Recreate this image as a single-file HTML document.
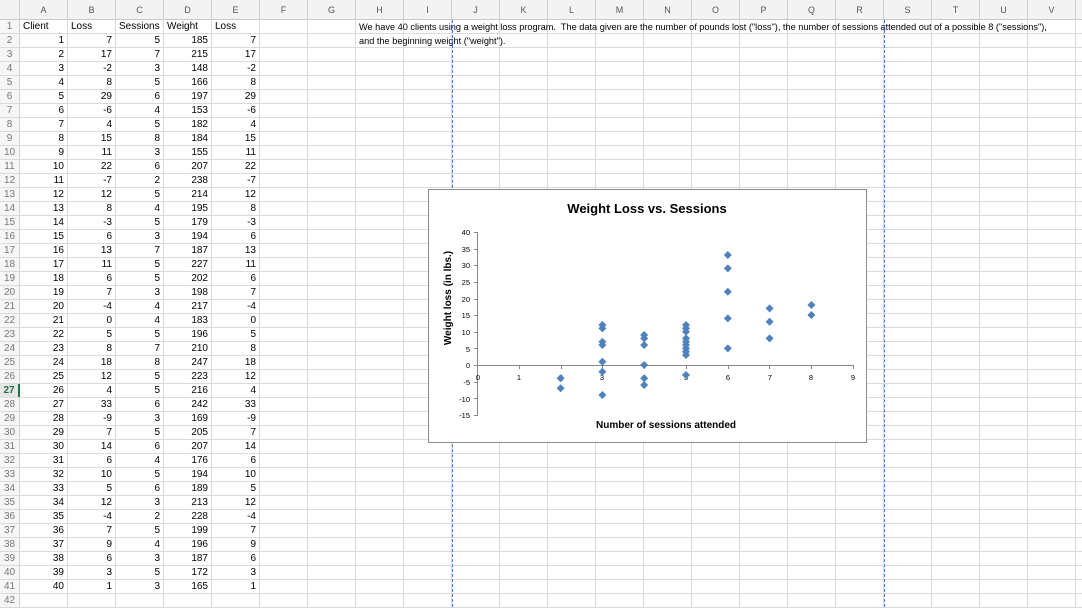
<!DOCTYPE html>
<html><head><meta charset="utf-8"><style>
*{margin:0;padding:0;box-sizing:border-box}
body{width:1082px;height:607px;overflow:hidden;background:#fff;font-family:"Liberation Sans",sans-serif;font-size:10px;color:#000;position:relative}
.r{position:absolute;left:0;height:14px;width:1082px;display:flex;border-bottom:1px solid #dadada}
.r div{width:48px;height:13px;border-right:1px solid #dadada;line-height:13px;padding:0 3px;white-space:nowrap;text-align:right;flex:none}
.r div.h{width:20px;text-align:center;color:#777;background:#f6f6f6;padding:0;border-right:1px solid #cfcfcf}
.r div.l{text-align:left}
.hd{position:absolute;left:0;top:0;height:20px;width:1082px;display:flex;background:#f3f3f3;border-bottom:1px solid #c8c8c8}
.hd div{width:48px;height:20px;border-right:1px solid #d0d0d0;line-height:20px;text-align:center;color:#555;font-size:9px;flex:none}
.hd div.h{width:20px}
.txt{position:absolute;left:359px;font-size:9.2px;line-height:13px;white-space:nowrap;letter-spacing:0}
.pb{position:absolute;top:20px;bottom:0;border-left:1px dashed #3b7fd9}
</style></head><body>
<div class="hd"><div class="h"></div><div>A</div><div>B</div><div>C</div><div>D</div><div>E</div><div>F</div><div>G</div><div>H</div><div>I</div><div>J</div><div>K</div><div>L</div><div>M</div><div>N</div><div>O</div><div>P</div><div>Q</div><div>R</div><div>S</div><div>T</div><div>U</div><div>V</div></div>

<div class="r" style="top:20px"><div class="h">1</div><div class="l">Client</div><div class="l">Loss</div><div class="l">Sessions</div><div class="l">Weight</div><div class="l">Loss</div><div></div><div></div><div></div><div></div><div></div><div></div><div></div><div></div><div></div><div></div><div></div><div></div><div></div><div></div><div></div><div></div><div></div></div>
<div class="r" style="top:34px"><div class="h">2</div><div>1</div><div>7</div><div>5</div><div>185</div><div>7</div><div></div><div></div><div></div><div></div><div></div><div></div><div></div><div></div><div></div><div></div><div></div><div></div><div></div><div></div><div></div><div></div><div></div></div>
<div class="r" style="top:48px"><div class="h">3</div><div>2</div><div>17</div><div>7</div><div>215</div><div>17</div><div></div><div></div><div></div><div></div><div></div><div></div><div></div><div></div><div></div><div></div><div></div><div></div><div></div><div></div><div></div><div></div><div></div></div>
<div class="r" style="top:62px"><div class="h">4</div><div>3</div><div>-2</div><div>3</div><div>148</div><div>-2</div><div></div><div></div><div></div><div></div><div></div><div></div><div></div><div></div><div></div><div></div><div></div><div></div><div></div><div></div><div></div><div></div><div></div></div>
<div class="r" style="top:76px"><div class="h">5</div><div>4</div><div>8</div><div>5</div><div>166</div><div>8</div><div></div><div></div><div></div><div></div><div></div><div></div><div></div><div></div><div></div><div></div><div></div><div></div><div></div><div></div><div></div><div></div><div></div></div>
<div class="r" style="top:90px"><div class="h">6</div><div>5</div><div>29</div><div>6</div><div>197</div><div>29</div><div></div><div></div><div></div><div></div><div></div><div></div><div></div><div></div><div></div><div></div><div></div><div></div><div></div><div></div><div></div><div></div><div></div></div>
<div class="r" style="top:104px"><div class="h">7</div><div>6</div><div>-6</div><div>4</div><div>153</div><div>-6</div><div></div><div></div><div></div><div></div><div></div><div></div><div></div><div></div><div></div><div></div><div></div><div></div><div></div><div></div><div></div><div></div><div></div></div>
<div class="r" style="top:118px"><div class="h">8</div><div>7</div><div>4</div><div>5</div><div>182</div><div>4</div><div></div><div></div><div></div><div></div><div></div><div></div><div></div><div></div><div></div><div></div><div></div><div></div><div></div><div></div><div></div><div></div><div></div></div>
<div class="r" style="top:132px"><div class="h">9</div><div>8</div><div>15</div><div>8</div><div>184</div><div>15</div><div></div><div></div><div></div><div></div><div></div><div></div><div></div><div></div><div></div><div></div><div></div><div></div><div></div><div></div><div></div><div></div><div></div></div>
<div class="r" style="top:146px"><div class="h">10</div><div>9</div><div>11</div><div>3</div><div>155</div><div>11</div><div></div><div></div><div></div><div></div><div></div><div></div><div></div><div></div><div></div><div></div><div></div><div></div><div></div><div></div><div></div><div></div><div></div></div>
<div class="r" style="top:160px"><div class="h">11</div><div>10</div><div>22</div><div>6</div><div>207</div><div>22</div><div></div><div></div><div></div><div></div><div></div><div></div><div></div><div></div><div></div><div></div><div></div><div></div><div></div><div></div><div></div><div></div><div></div></div>
<div class="r" style="top:174px"><div class="h">12</div><div>11</div><div>-7</div><div>2</div><div>238</div><div>-7</div><div></div><div></div><div></div><div></div><div></div><div></div><div></div><div></div><div></div><div></div><div></div><div></div><div></div><div></div><div></div><div></div><div></div></div>
<div class="r" style="top:188px"><div class="h">13</div><div>12</div><div>12</div><div>5</div><div>214</div><div>12</div><div></div><div></div><div></div><div></div><div></div><div></div><div></div><div></div><div></div><div></div><div></div><div></div><div></div><div></div><div></div><div></div><div></div></div>
<div class="r" style="top:202px"><div class="h">14</div><div>13</div><div>8</div><div>4</div><div>195</div><div>8</div><div></div><div></div><div></div><div></div><div></div><div></div><div></div><div></div><div></div><div></div><div></div><div></div><div></div><div></div><div></div><div></div><div></div></div>
<div class="r" style="top:216px"><div class="h">15</div><div>14</div><div>-3</div><div>5</div><div>179</div><div>-3</div><div></div><div></div><div></div><div></div><div></div><div></div><div></div><div></div><div></div><div></div><div></div><div></div><div></div><div></div><div></div><div></div><div></div></div>
<div class="r" style="top:230px"><div class="h">16</div><div>15</div><div>6</div><div>3</div><div>194</div><div>6</div><div></div><div></div><div></div><div></div><div></div><div></div><div></div><div></div><div></div><div></div><div></div><div></div><div></div><div></div><div></div><div></div><div></div></div>
<div class="r" style="top:244px"><div class="h">17</div><div>16</div><div>13</div><div>7</div><div>187</div><div>13</div><div></div><div></div><div></div><div></div><div></div><div></div><div></div><div></div><div></div><div></div><div></div><div></div><div></div><div></div><div></div><div></div><div></div></div>
<div class="r" style="top:258px"><div class="h">18</div><div>17</div><div>11</div><div>5</div><div>227</div><div>11</div><div></div><div></div><div></div><div></div><div></div><div></div><div></div><div></div><div></div><div></div><div></div><div></div><div></div><div></div><div></div><div></div><div></div></div>
<div class="r" style="top:272px"><div class="h">19</div><div>18</div><div>6</div><div>5</div><div>202</div><div>6</div><div></div><div></div><div></div><div></div><div></div><div></div><div></div><div></div><div></div><div></div><div></div><div></div><div></div><div></div><div></div><div></div><div></div></div>
<div class="r" style="top:286px"><div class="h">20</div><div>19</div><div>7</div><div>3</div><div>198</div><div>7</div><div></div><div></div><div></div><div></div><div></div><div></div><div></div><div></div><div></div><div></div><div></div><div></div><div></div><div></div><div></div><div></div><div></div></div>
<div class="r" style="top:300px"><div class="h">21</div><div>20</div><div>-4</div><div>4</div><div>217</div><div>-4</div><div></div><div></div><div></div><div></div><div></div><div></div><div></div><div></div><div></div><div></div><div></div><div></div><div></div><div></div><div></div><div></div><div></div></div>
<div class="r" style="top:314px"><div class="h">22</div><div>21</div><div>0</div><div>4</div><div>183</div><div>0</div><div></div><div></div><div></div><div></div><div></div><div></div><div></div><div></div><div></div><div></div><div></div><div></div><div></div><div></div><div></div><div></div><div></div></div>
<div class="r" style="top:328px"><div class="h">23</div><div>22</div><div>5</div><div>5</div><div>196</div><div>5</div><div></div><div></div><div></div><div></div><div></div><div></div><div></div><div></div><div></div><div></div><div></div><div></div><div></div><div></div><div></div><div></div><div></div></div>
<div class="r" style="top:342px"><div class="h">24</div><div>23</div><div>8</div><div>7</div><div>210</div><div>8</div><div></div><div></div><div></div><div></div><div></div><div></div><div></div><div></div><div></div><div></div><div></div><div></div><div></div><div></div><div></div><div></div><div></div></div>
<div class="r" style="top:356px"><div class="h">25</div><div>24</div><div>18</div><div>8</div><div>247</div><div>18</div><div></div><div></div><div></div><div></div><div></div><div></div><div></div><div></div><div></div><div></div><div></div><div></div><div></div><div></div><div></div><div></div><div></div></div>
<div class="r" style="top:370px"><div class="h">26</div><div>25</div><div>12</div><div>5</div><div>223</div><div>12</div><div></div><div></div><div></div><div></div><div></div><div></div><div></div><div></div><div></div><div></div><div></div><div></div><div></div><div></div><div></div><div></div><div></div></div>
<div class="r" style="top:384px"><div class="h" style="color:#1e7145;font-weight:bold;border-right:2px solid #217346;background:#e6e6e6">27</div><div>26</div><div>4</div><div>5</div><div>216</div><div>4</div><div></div><div></div><div></div><div></div><div></div><div></div><div></div><div></div><div></div><div></div><div></div><div></div><div></div><div></div><div></div><div></div><div></div></div>
<div class="r" style="top:398px"><div class="h">28</div><div>27</div><div>33</div><div>6</div><div>242</div><div>33</div><div></div><div></div><div></div><div></div><div></div><div></div><div></div><div></div><div></div><div></div><div></div><div></div><div></div><div></div><div></div><div></div><div></div></div>
<div class="r" style="top:412px"><div class="h">29</div><div>28</div><div>-9</div><div>3</div><div>169</div><div>-9</div><div></div><div></div><div></div><div></div><div></div><div></div><div></div><div></div><div></div><div></div><div></div><div></div><div></div><div></div><div></div><div></div><div></div></div>
<div class="r" style="top:426px"><div class="h">30</div><div>29</div><div>7</div><div>5</div><div>205</div><div>7</div><div></div><div></div><div></div><div></div><div></div><div></div><div></div><div></div><div></div><div></div><div></div><div></div><div></div><div></div><div></div><div></div><div></div></div>
<div class="r" style="top:440px"><div class="h">31</div><div>30</div><div>14</div><div>6</div><div>207</div><div>14</div><div></div><div></div><div></div><div></div><div></div><div></div><div></div><div></div><div></div><div></div><div></div><div></div><div></div><div></div><div></div><div></div><div></div></div>
<div class="r" style="top:454px"><div class="h">32</div><div>31</div><div>6</div><div>4</div><div>176</div><div>6</div><div></div><div></div><div></div><div></div><div></div><div></div><div></div><div></div><div></div><div></div><div></div><div></div><div></div><div></div><div></div><div></div><div></div></div>
<div class="r" style="top:468px"><div class="h">33</div><div>32</div><div>10</div><div>5</div><div>194</div><div>10</div><div></div><div></div><div></div><div></div><div></div><div></div><div></div><div></div><div></div><div></div><div></div><div></div><div></div><div></div><div></div><div></div><div></div></div>
<div class="r" style="top:482px"><div class="h">34</div><div>33</div><div>5</div><div>6</div><div>189</div><div>5</div><div></div><div></div><div></div><div></div><div></div><div></div><div></div><div></div><div></div><div></div><div></div><div></div><div></div><div></div><div></div><div></div><div></div></div>
<div class="r" style="top:496px"><div class="h">35</div><div>34</div><div>12</div><div>3</div><div>213</div><div>12</div><div></div><div></div><div></div><div></div><div></div><div></div><div></div><div></div><div></div><div></div><div></div><div></div><div></div><div></div><div></div><div></div><div></div></div>
<div class="r" style="top:510px"><div class="h">36</div><div>35</div><div>-4</div><div>2</div><div>228</div><div>-4</div><div></div><div></div><div></div><div></div><div></div><div></div><div></div><div></div><div></div><div></div><div></div><div></div><div></div><div></div><div></div><div></div><div></div></div>
<div class="r" style="top:524px"><div class="h">37</div><div>36</div><div>7</div><div>5</div><div>199</div><div>7</div><div></div><div></div><div></div><div></div><div></div><div></div><div></div><div></div><div></div><div></div><div></div><div></div><div></div><div></div><div></div><div></div><div></div></div>
<div class="r" style="top:538px"><div class="h">38</div><div>37</div><div>9</div><div>4</div><div>196</div><div>9</div><div></div><div></div><div></div><div></div><div></div><div></div><div></div><div></div><div></div><div></div><div></div><div></div><div></div><div></div><div></div><div></div><div></div></div>
<div class="r" style="top:552px"><div class="h">39</div><div>38</div><div>6</div><div>3</div><div>187</div><div>6</div><div></div><div></div><div></div><div></div><div></div><div></div><div></div><div></div><div></div><div></div><div></div><div></div><div></div><div></div><div></div><div></div><div></div></div>
<div class="r" style="top:566px"><div class="h">40</div><div>39</div><div>3</div><div>5</div><div>172</div><div>3</div><div></div><div></div><div></div><div></div><div></div><div></div><div></div><div></div><div></div><div></div><div></div><div></div><div></div><div></div><div></div><div></div><div></div></div>
<div class="r" style="top:580px"><div class="h">41</div><div>40</div><div>1</div><div>3</div><div>165</div><div>1</div><div></div><div></div><div></div><div></div><div></div><div></div><div></div><div></div><div></div><div></div><div></div><div></div><div></div><div></div><div></div><div></div><div></div></div>
<div class="r" style="top:594px"><div class="h">42</div><div></div><div></div><div></div><div></div><div></div><div></div><div></div><div></div><div></div><div></div><div></div><div></div><div></div><div></div><div></div><div></div><div></div><div></div><div></div><div></div><div></div><div></div></div>

<div class="txt" style="top:21px">We have 40 clients using a weight loss program.&nbsp; The data given are the number of pounds lost ("loss"), the number of sessions attended out of a possible 8 ("sessions"),</div>
<div class="txt" style="top:35px">and the beginning weight ("weight").</div>
<div class="pb" style="left:452px"></div>
<div class="pb" style="left:884px"></div>

<svg style="position:absolute;left:0;top:0" width="1082" height="607" xmlns="http://www.w3.org/2000/svg" font-family="Liberation Sans, sans-serif">
<defs><path id="d" d="M0,-4 L4,0 L0,4 L-4,0Z" fill="#4f81bd"/></defs>
<rect x="428.5" y="189.5" width="438" height="253" fill="#fff" stroke="#8c8c8c"/>
<text x="647" y="213" text-anchor="middle" font-size="13" font-weight="bold">Weight Loss vs. Sessions</text>
<g stroke="#868686" stroke-width="1">
<line x1="477.5" y1="232" x2="477.5" y2="415"/>
<line x1="477" y1="365.5" x2="853" y2="365.5"/>
<path d="M474,232.5h4M474,249.5h4M474,265.5h4M474,282.5h4M474,299.5h4M474,315.5h4M474,332.5h4M474,348.5h4M474,365.5h4M474,382.5h4M474,398.5h4M474,415.5h4"/>
<path d="M519.5,365v4M561.5,365v4M602.5,365v4M644.5,365v4M686.5,365v4M728.5,365v4M769.5,365v4M811.5,365v4M853.5,365v4"/>
</g>
<g font-size="7.5" text-anchor="end" fill="#000">
<text x="470" y="235">40</text><text x="470" y="252">35</text><text x="470" y="268">30</text><text x="470" y="285">25</text><text x="470" y="302">20</text><text x="470" y="318">15</text><text x="470" y="335">10</text><text x="470" y="352">5</text><text x="470" y="368">0</text><text x="470" y="385">-5</text><text x="470" y="402">-10</text><text x="470" y="418">-15</text>
</g>
<g font-size="7.5" text-anchor="middle" fill="#000">
<text x="478" y="380">0</text><text x="519" y="380">1</text><text x="561" y="380">2</text><text x="602" y="380">3</text><text x="644" y="380">4</text><text x="686" y="380">5</text><text x="728" y="380">6</text><text x="770" y="380">7</text><text x="811" y="380">8</text><text x="853" y="380">9</text>
</g>
<text x="666" y="428" text-anchor="middle" font-size="10" font-weight="bold">Number of sessions attended</text>
<text transform="translate(451,298) rotate(-90)" text-anchor="middle" font-size="10" font-weight="bold">Weight loss (in lbs.)</text>
<use href="#d" x="560.6" y="388.3"/><use href="#d" x="560.6" y="378.3"/>
<use href="#d" x="602.4" y="371.7"/><use href="#d" x="602.4" y="328.4"/><use href="#d" x="602.4" y="345"/><use href="#d" x="602.4" y="341.7"/><use href="#d" x="602.4" y="395"/><use href="#d" x="602.4" y="325"/><use href="#d" x="602.4" y="361.7"/>
<use href="#d" x="644.2" y="385"/><use href="#d" x="644.2" y="338.4"/><use href="#d" x="644.2" y="378.3"/><use href="#d" x="644.2" y="365"/><use href="#d" x="644.2" y="345"/><use href="#d" x="644.2" y="335"/>
<use href="#d" x="686" y="341.7"/><use href="#d" x="686" y="338.4"/><use href="#d" x="686" y="351.7"/><use href="#d" x="686" y="375"/><use href="#d" x="686" y="325"/><use href="#d" x="686" y="328.4"/><use href="#d" x="686" y="345"/><use href="#d" x="686" y="348.4"/><use href="#d" x="686" y="331.7"/><use href="#d" x="686" y="355"/>
<use href="#d" x="727.8" y="268.4"/><use href="#d" x="727.8" y="291.7"/><use href="#d" x="727.8" y="255"/><use href="#d" x="727.8" y="318.4"/><use href="#d" x="727.8" y="348.4"/>
<use href="#d" x="769.6" y="308.4"/><use href="#d" x="769.6" y="321.7"/><use href="#d" x="769.6" y="338.4"/>
<use href="#d" x="811.4" y="315"/><use href="#d" x="811.4" y="305"/>
</svg>
</body></html>
